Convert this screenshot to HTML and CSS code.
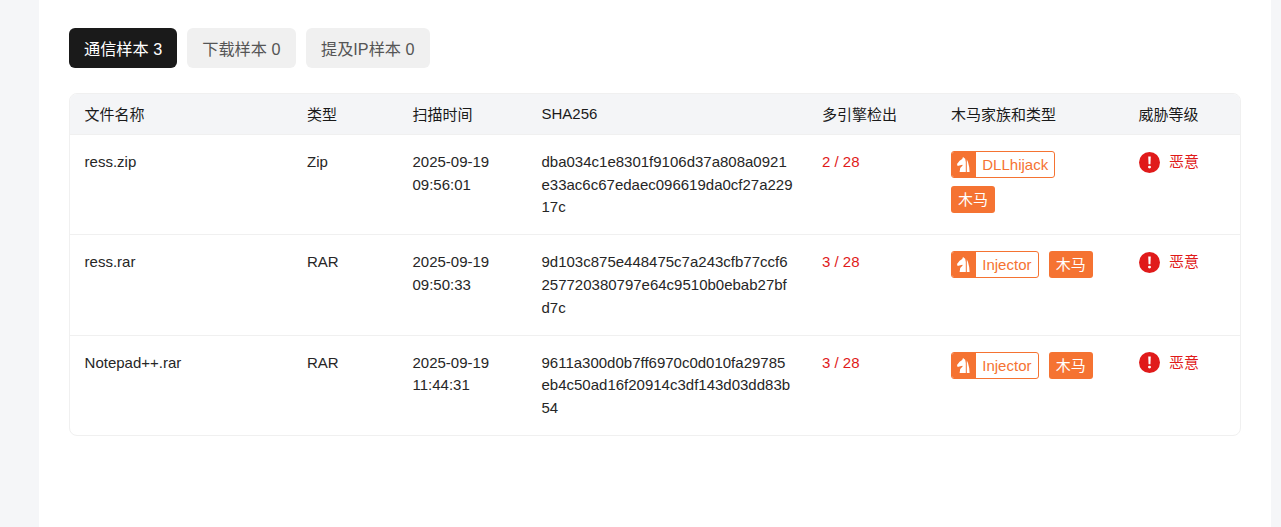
FILE: index.html
```html
<!DOCTYPE html>
<html lang="zh">
<head>
<meta charset="utf-8">
<title>样本</title>
<link rel="stylesheet" href="styles.css">
</head>
<body>
<svg class="defs" width="0" height="0" aria-hidden="true">
  <symbol id="horse" viewBox="0 0 13 15">
    <path fill="#fff" d="M6 0 5.2 2 2.6 3.8 0 7l.6 2 2.8-.8 2-.4.2.8L3.2 11l-.6 4h6.2V5L8.2 1.8zM9.8 2.6 11 5l1.2 5 .4 5h-2.8z"/>
  </symbol>
  <symbol id="alert" viewBox="0 0 20 20">
    <circle cx="10" cy="10" r="10" fill="#e01a1a"/>
    <path fill="#fff" d="M8.8 4.2h2.4l-.3 7.4H9.1z"/>
    <circle cx="10" cy="14.4" r="1.4" fill="#fff"/>
  </symbol>
</svg>
<main class="panel">
  <div class="tabs">
    <button class="tab tab-active">通信样本 3</button>
    <button class="tab">下载样本 0</button>
    <button class="tab">提及IP样本 0</button>
  </div>
  <div class="table-wrap">
    <table class="samples">
      <colgroup>
        <col class="c-name"><col class="c-type"><col class="c-time"><col class="c-sha"><col class="c-eng"><col class="c-fam"><col class="c-lvl">
      </colgroup>
      <thead>
        <tr><th>文件名称</th><th>类型</th><th>扫描时间</th><th>SHA256</th><th>多引擎检出</th><th>木马家族和类型</th><th>威胁等级</th></tr>
      </thead>
      <tbody>
        <tr>
          <td>ress.zip</td><td>Zip</td>
          <td><span class="time">2025-09-19 09:56:01</span></td>
          <td class="sha">dba034c1e8301f9106d37a808a0921e33ac6c67edaec096619da0cf27a22917c</td>
          <td class="det">2 / 28</td>
          <td><div class="tags tags-narrow">
            <span class="family"><span class="family-icon"><svg class="horse"><use href="#horse"/></svg></span><span class="family-name">DLLhijack</span></span>
            <span class="kind">木马</span>
          </div></td>
          <td><span class="level"><svg class="alert"><use href="#alert"/></svg>恶意</span></td>
        </tr>
        <tr>
          <td>ress.rar</td><td>RAR</td>
          <td><span class="time">2025-09-19 09:50:33</span></td>
          <td class="sha">9d103c875e448475c7a243cfb77ccf6257720380797e64c9510b0ebab27bfd7c</td>
          <td class="det">3 / 28</td>
          <td><div class="tags">
            <span class="family"><span class="family-icon"><svg class="horse"><use href="#horse"/></svg></span><span class="family-name">Injector</span></span>
            <span class="kind">木马</span>
          </div></td>
          <td><span class="level"><svg class="alert"><use href="#alert"/></svg>恶意</span></td>
        </tr>
        <tr>
          <td>Notepad++.rar</td><td>RAR</td>
          <td><span class="time">2025-09-19 11:44:31</span></td>
          <td class="sha">9611a300d0b7ff6970c0d010fa29785eb4c50ad16f20914c3df143d03dd83b54</td>
          <td class="det">3 / 28</td>
          <td><div class="tags">
            <span class="family"><span class="family-icon"><svg class="horse"><use href="#horse"/></svg></span><span class="family-name">Injector</span></span>
            <span class="kind">木马</span>
          </div></td>
          <td><span class="level"><svg class="alert"><use href="#alert"/></svg>恶意</span></td>
        </tr>
      </tbody>
    </table>
  </div>
</main>
</body>
</html>
```

FILE: styles.css
```css
* { box-sizing: border-box; }
html, body { height: 100%; }
body {
  margin: 0;
  background: #f5f6f8;
  font-family: "Liberation Sans", "Noto Sans CJK SC", sans-serif;
  font-size: 15px;
  color: #1f1f1f;
  overflow: hidden;
}
.defs { position: absolute; }
.panel {
  margin: 0 10px 0 39px;
  height: 527px;
  background: #fff;
  padding: 28px 30px 0;
}
.tabs { display: flex; gap: 10px; margin-bottom: 25px; }
.tab {
  height: 40px;
  padding: 0 15px;
  border: 0;
  border-radius: 6px;
  background: #f0f0f0;
  color: #555;
  font: 16.2px "Liberation Sans", "Noto Sans CJK SC", sans-serif;
}
.tab:last-child { padding: 0 15.5px; }
.tab-active { background: #1a1a1a; color: #fff; }
.table-wrap {
  border: 1px solid #f0f0f0;
  border-radius: 8px;
  overflow: hidden;
  width: 1172px;
}
.samples { width: 1170px; border-collapse: collapse; table-layout: fixed; }
.c-name { width: 222.4px; }
.c-type { width: 105.5px; }
.c-time { width: 129px; }
.c-sha { width: 280.5px; }
.c-eng { width: 129px; }
.c-fam { width: 187.5px; }
.c-lvl { width: 116.1px; }
th {
  height: 40.4px;
  padding: 0 15px 0 14.6px;
  background: #f4f5f7;
  border-bottom: 1px solid #f0f0f0;
  text-align: left;
  font-weight: 400;
  color: #1a1a1a;
}
td {
  padding: 16px 15px 15.08px 14.6px;
  vertical-align: top;
  line-height: 22.75px;
  border-bottom: 1px solid #f0f0f0;
  color: #262626;
}
tbody tr:last-child td { border-bottom: 0; padding-bottom: 15.5px; }
.time { display: block; width: 90px; }
td.sha { word-break: break-all; padding-right: 14.3px; }
.det { color: #e01a1a; }
.tags { display: flex; flex-wrap: wrap; gap: 8px 10px; }
.tags-narrow { flex-direction: column; align-items: flex-start; }
.family {
  display: inline-flex;
  height: 27px;
  border: 1px solid #f57332;
  border-radius: 3px;
  overflow: hidden;
  background: #fff;
  color: #f57332;
}
.family-icon {
  width: 24px;
  background: #f57332;
  display: flex;
  align-items: center;
  justify-content: center;
}
.horse { width: 13px; height: 15px; display: block; }
.family-name { padding: 0 6.3px; line-height: 25px; }
.kind {
  height: 27px;
  padding: 0 7px;
  background: #f57332;
  color: #fff;
  border-radius: 3px;
  line-height: 27px;
}
.level { display: flex; align-items: center; gap: 9px; color: #e01a1a; }
.alert { width: 21px; height: 21px; margin-left: 0.6px; }
```
